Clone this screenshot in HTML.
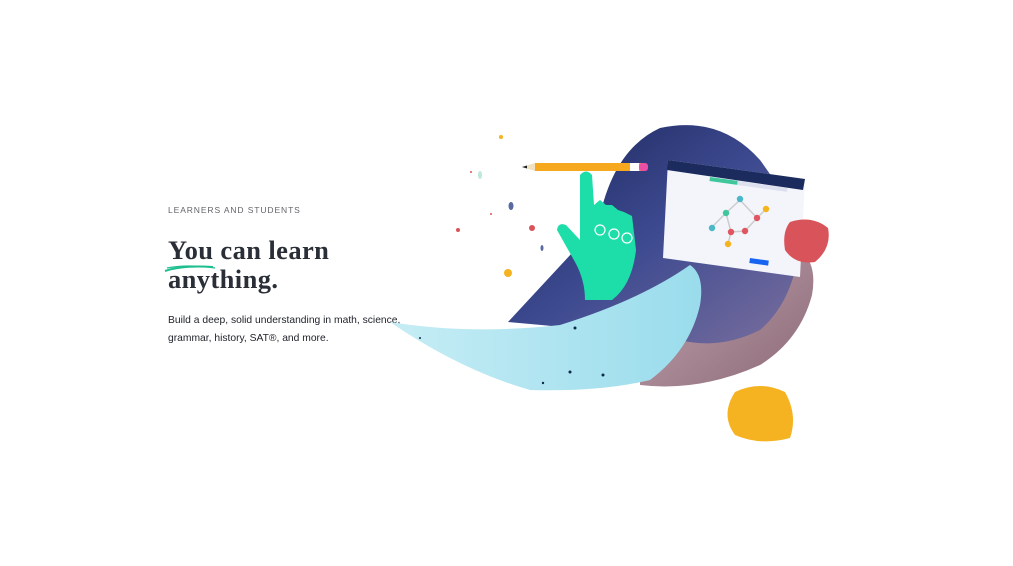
<!DOCTYPE html>
<html><head><meta charset="utf-8"><style>
html,body{margin:0;padding:0;background:#fff;width:1013px;height:566px;overflow:hidden;position:relative}
.t{position:absolute;font-family:"Liberation Sans",sans-serif;color:#21242c}
</style></head><body>
<div class="t" style="left:168px;top:205px;font-size:8.5px;letter-spacing:0.9px;color:#626569">LEARNERS AND STUDENTS</div>
<div class="t" style="left:168px;top:236px;font-family:'Liberation Serif',serif;font-size:26.5px;line-height:29px;font-weight:bold;letter-spacing:0.4px;color:#2a2e37">You can learn<br>anything.</div>
<svg style="position:absolute;left:163px;top:262px" width="56" height="12"><path d="M2 9 Q20 3 50 5" stroke="#1fbf8f" stroke-width="2" fill="none"/><path d="M4 6 Q25 2 52 6" stroke="#1fbf8f" stroke-width="1.3" fill="none"/></svg>
<div class="t" style="left:168px;top:312px;font-size:10.3px;line-height:18px">Build a deep, solid understanding in math, science,<br>grammar, history, SAT®, and more.</div>
<svg style="position:absolute;left:0;top:0" width="1013" height="566">
<defs>
<linearGradient id="sp" x1="0" y1="0" x2="1" y2="1"><stop offset="0" stop-color="#1a2558"/><stop offset=".5" stop-color="#3d4a90"/><stop offset="1" stop-color="#7a6f9e"/></linearGradient>
<linearGradient id="pk" x1="0" y1="0" x2="1" y2="1"><stop offset="0" stop-color="#c2a6b0"/><stop offset="1" stop-color="#8d6a78"/></linearGradient>
<linearGradient id="bl" x1="0" y1="0" x2="1" y2="0"><stop offset="0" stop-color="#c6edf5"/><stop offset="1" stop-color="#9adcec"/></linearGradient>
</defs>
<path d="M640 270 Q700 245 780 240 Q820 250 812 295 Q800 340 760 365 Q700 392 640 385 Z" fill="url(#pk)"/>
<path d="M508 322 L598 225 Q612 150 660 128 Q720 115 760 160 Q790 200 800 240 Q795 300 760 330 Q720 350 680 340 Q600 330 508 322Z" fill="url(#sp)"/>
<path d="M390 322 Q470 335 560 325 Q640 300 690 265 Q705 275 700 305 Q690 350 650 380 Q600 392 530 390 Q460 370 390 322Z" fill="url(#bl)"/>
<g fill="#0d2a4a"><circle cx="575" cy="328" r="1.5"/><circle cx="570" cy="372" r="1.5"/><circle cx="603" cy="375" r="1.5"/><circle cx="543" cy="383" r="1.2"/><circle cx="420" cy="338" r="1"/></g>
<path d="M668 160 L805 179 L800 277 L663 258 Z" fill="#f3f5fb"/>
<path d="M668 160 L805 179 L803 190 L667 170 Z" fill="#1c2b5e"/>
<rect x="710" y="177" width="28" height="4" fill="#3fc79b" transform="rotate(8 710 177)"/>
<rect x="738" y="181" width="50" height="4" fill="#dde0ee" transform="rotate(8 738 181)"/>
<rect x="750" y="258" width="19" height="5" fill="#1865f2" transform="rotate(8 750 258)"/>
<g stroke="#ccc" stroke-width="1.5" fill="none"><path d="M726 213 L740 200 L757 218 L745 231 L731 232 L726 213 M712 227 L726 213 M757 218 L766 209 M731 232 L728 244"/></g>
<circle cx="740" cy="199" r="3.2" fill="#4bb8c8"/><circle cx="726" cy="213" r="3.2" fill="#3fc79b"/><circle cx="712" cy="228" r="3.2" fill="#4bb8c8"/><circle cx="757" cy="218" r="3.2" fill="#e0555f"/><circle cx="766" cy="209" r="3.2" fill="#f5b41f"/><circle cx="745" cy="231" r="3.2" fill="#e0555f"/><circle cx="731" cy="232" r="3.2" fill="#e0555f"/><circle cx="728" cy="244" r="3.2" fill="#f5b41f"/>
<path d="M790 222 Q812 215 828 228 Q832 248 815 262 Q795 265 785 250 Q782 232 790 222Z" fill="#d9545a"/>
<path d="M735 392 Q760 380 785 392 Q798 415 790 438 Q760 446 735 435 Q720 415 735 392Z" fill="#f6b321"/>
<path d="M580 175 Q586 168 592 175 L594 205 L600 200 L606 205 L612 205 L618 210 L624 212 L632 216 L636 250 Q632 285 612 300 L585 300 Q585 280 575 262 L557 230 Q558 222 566 225 L580 240 Z" fill="#1ddea8"/>
<g stroke="#fff" stroke-width="1.2" fill="none"><circle cx="600" cy="230" r="5"/><circle cx="614" cy="234" r="5"/><circle cx="627" cy="238" r="5"/></g>
<rect x="535" y="163" width="108" height="8" fill="#f6a81e"/><rect x="630" y="163" width="9" height="8" fill="#fff"/><rect x="639" y="163" width="9" height="8" rx="3" fill="#ed4ea5"/>
<path d="M535 163 L522 167 L535 171Z" fill="#f0e2c0"/><path d="M527 165.5 L522 167 L527 168.5Z" fill="#222"/>
<circle cx="501" cy="137" r="2" fill="#f6b321"/><ellipse cx="511" cy="206" rx="2.5" ry="4" fill="#5a6aa0"/><circle cx="532" cy="228" r="3" fill="#d9545a"/><circle cx="508" cy="273" r="4" fill="#f6b321"/><ellipse cx="542" cy="248" rx="1.5" ry="3" fill="#5a6aa0"/><circle cx="458" cy="230" r="2" fill="#d9545a"/><ellipse cx="480" cy="175" rx="2" ry="4" fill="#bde8dc"/><circle cx="471" cy="172" r="1" fill="#d9545a"/><circle cx="491" cy="214" r="1" fill="#d9545a"/>
</svg>
</body></html>
